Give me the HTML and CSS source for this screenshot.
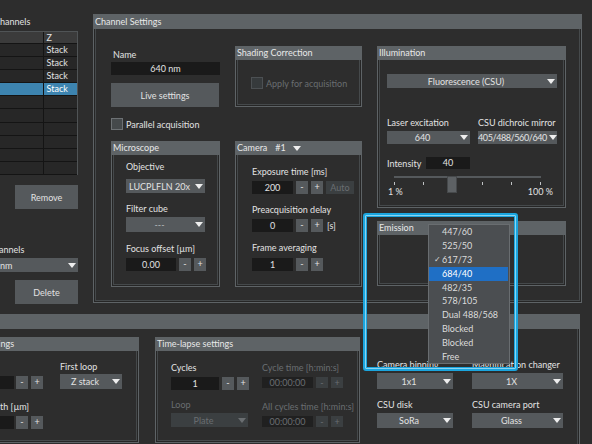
FILE: index.html
```html
<!DOCTYPE html>
<html lang="en">
<head>
  <meta charset="utf-8">
  <title>Channel Settings</title>
  <meta name="viewport" content="width=device-width, initial-scale=1.0">
  <link rel="stylesheet" href="styles.css">
</head>
<body>
  <div class="screen">

    <div class="top">
      <!-- channel list, cut off at the left edge -->
      <aside class="channels">
        <div class="side-label first">Channels</div>
        <div class="ch-table">
          <div class="cell head"></div><div class="cell head">Z</div>
          <div class="cell"></div><div class="cell">Stack</div>
          <div class="cell"></div><div class="cell">Stack</div>
          <div class="cell"></div><div class="cell">Stack</div>
          <div class="cell sel"></div><div class="cell sel">Stack</div>
          <div class="cell"></div><div class="cell"></div>
          <div class="cell"></div><div class="cell"></div>
          <div class="cell"></div><div class="cell"></div>
          <div class="cell"></div><div class="cell"></div>
          <div class="cell"></div><div class="cell"></div>
          <div class="cell"></div><div class="cell"></div>
        </div>
        <button class="btn side-btn remove-btn">Remove</button>
        <div class="side-label second">Channels</div>
        <div class="combo side-combo"><span class="combo-text left">640 nm</span><span class="arrow"></span></div>
        <button class="btn side-btn delete-btn">Delete</button>
      </aside>

      <section class="group channel-settings">
        <div class="group-head">Channel Settings</div>
        <div class="cs-body">

          <div class="cs-col">
            <div class="lbl name-lbl">Name</div>
            <div class="field name-field">640 nm</div>
            <button class="btn live-btn">Live settings</button>
            <div class="check-row"><span class="box"></span>Parallel acquisition</div>

            <section class="group microscope">
              <div class="group-head sm">Microscope</div>
              <div class="mic-body">
                <div class="lbl">Objective</div>
                <div class="combo mic-combo obj-combo"><span class="combo-text">LUCPLFLN 20x</span><span class="arrow"></span></div>
                <div class="lbl filter-lbl">Filter cube</div>
                <div class="combo mic-combo filter-combo"><span class="combo-text soft">---</span><span class="arrow"></span></div>
                <div class="lbl focus-lbl">Focus offset [µm]</div>
                <div class="spin-row focus-row">
                  <div class="field w50">0.00</div><span class="mini">-</span><span class="mini">+</span>
                </div>
              </div>
            </section>
          </div>

          <div class="cs-col">
            <section class="group shading">
              <div class="group-head sm">Shading Correction</div>
              <div class="shade-body">
                <div class="check-row dim"><span class="box dim"></span>Apply for acquisition</div>
              </div>
            </section>

            <section class="group camera">
              <div class="group-head sm cam-head">
                <span>Camera</span><span class="cam-no">#1</span><span class="arrow head-arrow"></span>
              </div>
              <div class="cam-body">
                <div class="lbl">Exposure time [ms]</div>
                <div class="spin-row cam-row">
                  <div class="field w41">200</div><span class="mini">-</span><span class="mini">+</span><span class="auto-btn">Auto</span>
                </div>
                <div class="lbl cam-lbl">Preacquisition delay</div>
                <div class="spin-row cam-row">
                  <div class="field w41">0</div><span class="mini">-</span><span class="mini">+</span><span class="unit">[s]</span>
                </div>
                <div class="lbl cam-lbl">Frame averaging</div>
                <div class="spin-row cam-row last">
                  <div class="field w41">1</div><span class="mini">-</span><span class="mini">+</span>
                </div>
              </div>
            </section>
          </div>

          <div class="cs-col">
            <section class="group illumination">
              <div class="group-head sm">Illumination</div>
              <div class="illum-body">
                <div class="combo wide-combo"><span class="combo-text">Fluorescence (CSU)</span><span class="arrow"></span></div>
                <div class="laser-grid">
                  <div class="lbl">Laser excitation</div>
                  <div class="lbl">CSU dichroic mirror</div>
                  <div class="combo small-combo"><span class="combo-text">640</span><span class="arrow"></span></div>
                  <div class="combo small-combo"><span class="combo-text tight">405/488/560/640</span><span class="arrow"></span></div>
                </div>
                <div class="int-row">
                  <span class="int-lbl">Intensity</span>
                  <div class="field int-field">40</div>
                </div>
                <div class="slider">
                  <div class="track"></div>
                  <div class="ticks"><i></i><i></i><i></i><i></i><i></i><i></i></div>
                  <div class="scale"><span>1 %</span><span>100 %</span></div>
                  <div class="handle"></div>
                </div>
              </div>
            </section>

            <section class="group emission">
              <div class="group-head sm">Emission</div>
            </section>
          </div>

        </div>
      </section>
    </div>

    <section class="group acq">
      <div class="group-head">Acquisition</div>
      <div class="acq-body">

        <section class="group zstack">
          <div class="group-head sm">Z-stack settings</div>
          <div class="z-body">
            <div class="z-col">
              <div class="lbl">Slices</div>
              <div class="spin-row z-row">
                <div class="field w58"></div><span class="mini">-</span><span class="mini">+</span>
              </div>
              <div class="lbl z-lbl2">Step width [µm]</div>
              <div class="spin-row z-row">
                <div class="field w58"></div><span class="mini">-</span><span class="mini">+</span>
              </div>
            </div>
            <div class="z-col">
              <div class="lbl">First loop</div>
              <div class="combo loop-combo"><span class="combo-text">Z stack</span><span class="arrow"></span></div>
            </div>
          </div>
        </section>

        <section class="group timelapse">
          <div class="group-head sm">Time-lapse settings</div>
          <div class="tl-body">
            <div class="tl-col">
              <div class="lbl">Cycles</div>
              <div class="spin-row tl-row">
                <div class="field w48">1</div><span class="mini">-</span><span class="mini">+</span>
              </div>
              <div class="lbl dim tl-lbl2">Loop</div>
              <div class="combo dim plate-combo"><span class="combo-text">Plate</span><span class="arrow dim"></span></div>
            </div>
            <div class="tl-col">
              <div class="lbl dim">Cycle time [h:min:s]</div>
              <div class="spin-row tl-row small">
                <div class="field dim w51">00:00:00</div><span class="mini dim">-</span><span class="mini dim">+</span>
              </div>
              <div class="lbl dim tl-lbl3">All cycles time [h:min:s]</div>
              <div class="spin-row tl-row small">
                <div class="field dim w51">00:00:00</div><span class="mini dim">-</span><span class="mini dim">+</span>
              </div>
            </div>
          </div>
        </section>

        <div class="optics">
          <div class="lbl">Camera binning</div>
          <div class="lbl">Magnification changer</div>
          <div class="combo opt-combo"><span class="combo-text">1x1</span><span class="arrow"></span></div>
          <div class="combo opt-combo"><span class="combo-text">1X</span><span class="arrow"></span></div>
          <div class="lbl opt-lbl2">CSU disk</div>
          <div class="lbl opt-lbl2">CSU camera port</div>
          <div class="combo opt-combo second"><span class="combo-text">SoRa</span><span class="arrow"></span></div>
          <div class="combo opt-combo second"><span class="combo-text">Glass</span><span class="arrow"></span></div>
        </div>

      </div>
    </section>

    <!-- highlight and the open emission list lie over the panels -->
    <div class="focus-ring"></div>
    <ul class="popup">
      <li class="pop-item"><span class="tick"></span>447/60</li>
      <li class="pop-item"><span class="tick"></span>525/50</li>
      <li class="pop-item"><span class="tick">✓</span>617/73</li>
      <li class="pop-item hl"><span class="tick"></span>684/40</li>
      <li class="pop-item"><span class="tick"></span>482/35</li>
      <li class="pop-item"><span class="tick"></span>578/105</li>
      <li class="pop-item"><span class="tick"></span>Dual 488/568</li>
      <li class="pop-item"><span class="tick"></span>Blocked</li>
      <li class="pop-item"><span class="tick"></span>Blocked</li>
      <li class="pop-item"><span class="tick"></span>Free</li>
    </ul>

  </div>
</body>
</html>
```

FILE: styles.css
```css
/* dark microscope-software look */
* {
  box-sizing: border-box;
}
body {
  margin: 0;
  background: #2d2d2d;
  font-family: Lato, "Open Sans", sans-serif;
  font-size: 9px;
  color: #e2e2e2;
}
.screen {
  position: relative;
  width: 592px;
  height: 444px;
  overflow: hidden;
}
.top {
  display: flex;
  align-items: flex-start;
  height: 303px;
}

/* generic widgets */
.lbl {
  height: 12px;
  line-height: 12px;
  white-space: nowrap;
}
.dim {
  color: #6a6e71;
}
.btn {
  border: 0;
  padding: 0;
  background: #55595c;
  color: #e2e2e2;
  font: inherit;
  display: block;
}
.field {
  height: 13px;
  line-height: 13px;
  background: #1a1a1a;
  text-align: center;
  flex: none;
}
.field.dim {
  background: #202020;
}
.combo {
  display: flex;
  align-items: center;
  height: 14px;
  background: #55595c;
}
.combo.dim {
  background: #3b3f41;
  color: #6a6e71;
}
.combo-text {
  flex: 1;
  text-align: center;
  white-space: nowrap;
  overflow: hidden;
}
.combo-text.left {
  text-align: left;
  padding-left: 22px;
}
.combo-text.soft {
  color: #b9bcbe;
}
.combo-text.tight {
  letter-spacing: -0.4px;
  overflow: visible;
}
.arrow {
  flex: none;
  width: 0;
  height: 0;
  margin: 0 2px;
  border-left: 4px solid transparent;
  border-right: 4px solid transparent;
  border-top: 5px solid #eeeeee;
}
.arrow.dim {
  border-top-color: #6a6e71;
}
.spin-row {
  display: flex;
  gap: 3px;
  height: 13px;
}
.mini {
  flex: none;
  width: 12px;
  height: 13px;
  line-height: 12px;
  background: #55595c;
  text-align: center;
}
.mini.dim {
  background: #3b3f41;
}
.check-row {
  display: flex;
  align-items: center;
  gap: 3px;
  height: 12px;
  white-space: nowrap;
}
.box {
  width: 12px;
  height: 12px;
  border: 1px solid #6d7174;
  background: #45494b;
}
.box.dim {
  border-color: #4c5053;
  background: #363a3c;
}
.w41 { width: 41px; }
.w48 { width: 48px; }
.w50 { width: 50px; }
.w51 { width: 51px; }
.w58 { width: 58px; }

/* group boxes */
.group {
  flex: none;
  border: 1px solid #5e6366;
  background: #2d2d2d;
  box-shadow: inset 0 0 0 1px #262626, inset 0 0 0 2px #45494b;
}
.group-head {
  margin: -1px -1px 0;
  height: 15px;
  line-height: 15px;
  padding-left: 2px;
  background: #5e6366;
  color: #e8e8e8;
  white-space: nowrap;
  overflow: hidden;
}
.group-head.sm {
  height: 14px;
  line-height: 14px;
}

/* left channel list */
.channels {
  flex: none;
  display: flex;
  flex-direction: column;
  width: 118px;
  margin-left: -40px;
  padding-top: 16px;
}
.side-label {
  height: 12px;
  line-height: 12px;
}
.side-label.first {
  padding-left: 34px;
}
.side-label.second {
  padding-left: 28px;
  margin-top: 35px;
}
.ch-table {
  margin-top: 3px;
  display: grid;
  grid-template-columns: 83.5px 33.5px;
  grid-template-rows: 11.5px repeat(10, 13.2px);
  background: #272727;
  border-top: 1px solid #505456;
  border-right: 1px solid #505456;
}
.cell {
  padding-left: 3px;
  line-height: 12px;
  border-bottom: 1px solid #141414;
}
.cell:nth-child(odd) {
  border-right: 1px solid #141414;
}
.cell.head {
  background: #3b3b3b;
  line-height: 11px;
}
.cell.sel {
  background: #3d84b0;
  color: #fff;
}
.side-btn {
  align-self: flex-end;
  width: 63px;
  height: 24px;
}
.remove-btn {
  margin-top: 10px;
}
.side-combo {
  margin-top: 2px;
}
.delete-btn {
  margin-top: 8px;
}

/* channel settings */
.channel-settings {
  width: 489px;
  height: 289px;
  margin: 14px 0 0 15px;
}
.cs-body {
  display: grid;
  grid-template-columns: 109px 127px 189px;
  column-gap: 15px;
  align-items: start;
  padding: 17px 0 0 17px;
}
.name-lbl {
  margin-top: 3px;
  padding-left: 2px;
}
.name-field {
  margin-top: 1px;
}
.live-btn {
  width: 108px;
  height: 24px;
  margin-top: 8px;
}
.cs-col > .check-row {
  margin-top: 11px;
}
.microscope {
  height: 146px;
  margin-top: 11px;
}
.mic-body {
  padding: 6px 0 0 14px;
}
.mic-combo {
  width: 79px;
}
.obj-combo {
  margin-top: 6px;
}
.filter-lbl {
  margin-top: 10px;
}
.filter-combo {
  margin-top: 2px;
  height: 15px;
}
.focus-lbl {
  margin-top: 11px;
}
.focus-row {
  margin-top: 3px;
}

.shading {
  height: 61px;
}
.shade-body {
  padding: 17px 0 0 15px;
}
.camera {
  height: 146px;
  margin-top: 34px;
}
.cam-head {
  display: flex;
  align-items: center;
}
.cam-no {
  margin-left: 8px;
}
.head-arrow {
  margin-left: 7px;
}
.cam-body {
  padding: 11px 0 0 16px;
}
.cam-row {
  margin-top: 3px;
}
.cam-row.last {
  margin-top: 4px;
}
.cam-lbl {
  margin-top: 10px;
}
.auto-btn {
  width: 28px;
  height: 13px;
  line-height: 13px;
  text-align: center;
  background: #3b3f41;
  color: #6a6e71;
}
.unit {
  line-height: 13px;
  margin-left: 1px;
}

.illumination {
  height: 162px;
}
.illum-body {
  padding: 14px 0 0 9px;
}
.wide-combo {
  width: 170px;
}
.laser-grid {
  display: grid;
  grid-template-columns: 83px 79px;
  column-gap: 8px;
  row-gap: 2px;
  margin-top: 29px;
}
.small-combo {
  height: 13px;
}
.int-row {
  display: flex;
  align-items: center;
  height: 12px;
  margin-top: 13px;
}
.int-lbl {
  width: 39px;
}
.int-field {
  width: 44px;
  height: 12px;
  line-height: 12px;
}
.slider {
  position: relative;
  width: 170px;
  margin-top: 1px;
}
.track {
  width: 147px;
  height: 2px;
  margin: 7px 0 0 7px;
  background: #55595c;
}
.ticks {
  display: flex;
  justify-content: space-between;
  width: 147px;
  margin: 4px 0 0 7px;
}
.ticks i {
  width: 1px;
  height: 3px;
  background: #bfc2c4;
}
.scale {
  display: flex;
  justify-content: space-between;
  width: 166px;
  margin-top: 2px;
  line-height: 10px;
  padding-left: 1px;
}
.handle {
  position: absolute;
  left: 60px;
  top: 0;
  width: 10px;
  height: 17px;
  background: #5d6164;
  border: 1px solid #46494b;
}
.emission {
  height: 65px;
  margin-top: 13px;
}

/* acquisition area */
.acq {
  width: 632px;
  height: 140px;
  margin: 11px 0 0 -52px;
}
.acq-body {
  display: flex;
  align-items: flex-start;
  padding-top: 8px;
}
.zstack {
  width: 189px;
  height: 106px;
  margin-left: 1px;
}
.z-body {
  display: grid;
  grid-template-columns: 87px 62px;
  column-gap: 17px;
  padding: 10px 0 0 5px;
}
.z-row {
  margin-top: 3px;
}
.z-row .field {
  margin-right: -1px;
}
.z-lbl2 {
  margin-top: 12px;
  padding-left: 10px;
}
.loop-combo {
  height: 15px;
  margin-top: 1px;
}
.timelapse {
  width: 205px;
  height: 106px;
  margin-left: 16px;
}
.tl-body {
  display: grid;
  grid-template-columns: 77px 80px;
  column-gap: 14px;
  padding: 11px 0 0 15px;
}
.tl-row {
  margin-top: 3px;
}
.tl-row.small .field,
.tl-row.small .mini {
  height: 11px;
  line-height: 11px;
}
.tl-lbl2 {
  margin-top: 9px;
}
.tl-lbl3 {
  margin-top: 11px;
}
.plate-combo {
  margin-top: 2px;
}
.optics {
  display: grid;
  grid-template-columns: 76px 91px;
  column-gap: 19px;
  width: 186px;
  margin-left: 17px;
  padding-top: 22px;
}
.opt-combo {
  height: 16px;
  margin-top: 2px;
}
.opt-combo.second {
  height: 15px;
}
.opt-lbl2 {
  margin-top: 10px;
}

/* overlays */
.focus-ring {
  position: absolute;
  left: 363px;
  top: 213px;
  width: 155px;
  height: 158px;
  border: 2px solid #1ba5de;
  border-radius: 3px;
  box-shadow: inset 0 0 0 1px #8bd4f1, inset 0 0 0 2px #1ba5de;
}
.popup {
  position: absolute;
  left: 428px;
  top: 224px;
  width: 82px;
  height: 140px;
  margin: 0;
  padding: 0.4px 0 0;
  list-style: none;
  background: #4b4e51;
  border: 1px solid #696d70;
  color: #dcdcdc;
}
.pop-item {
  display: flex;
  height: 13.8px;
  line-height: 13.8px;
  margin-right: 1px;
  white-space: nowrap;
}
.pop-item.hl {
  background: #1f6fc5;
  color: #fff;
}
.tick {
  width: 13px;
  padding-left: 5px;
  font-family: "DejaVu Sans", sans-serif;
  font-size: 8px;
}
```
